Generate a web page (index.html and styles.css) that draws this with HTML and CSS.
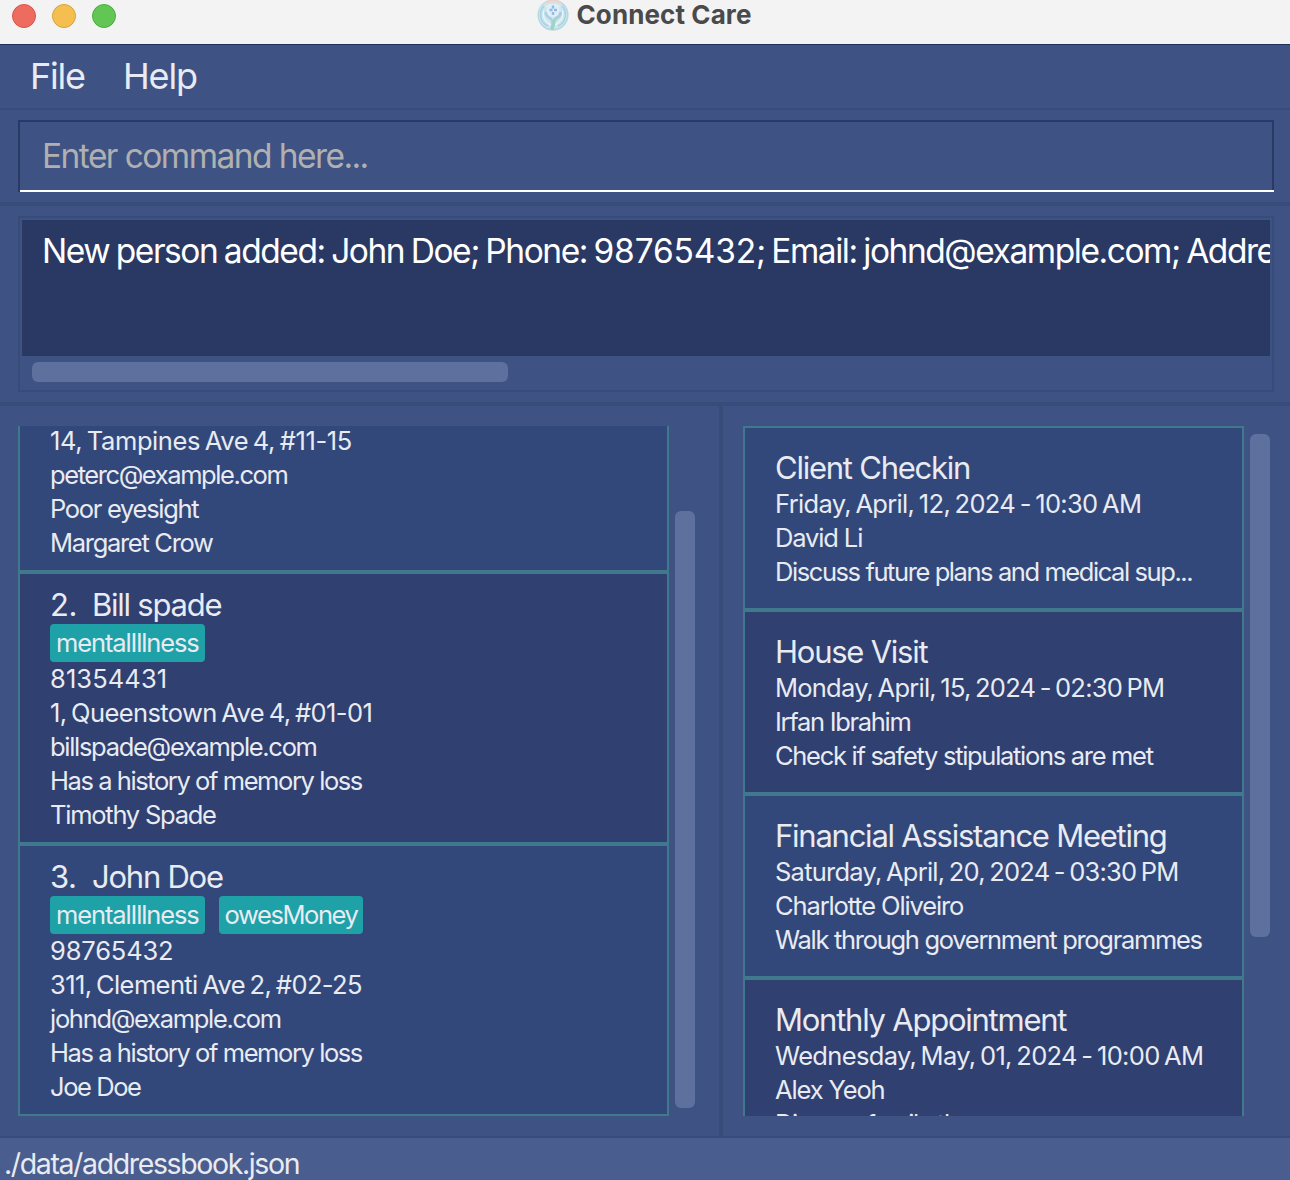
FILE: index.html
```html
<!DOCTYPE html>
<html lang="en">
<head>
<meta charset="utf-8">
<title>Connect Care</title>
<link rel="stylesheet" href="styles.css">
</head>
<body>
<div class="window">
  <header class="titlebar">
    <div class="lights"><i class="light red"></i><i class="light yellow"></i><i class="light green"></i></div>
    <div class="title">
      <svg class="logo" viewBox="0 0 32 32" fill="none">
        <defs>
          <linearGradient id="ring" x1="0" y1="0" x2="1" y2="1"><stop offset="0" stop-color="#b9e6e6"/><stop offset=".55" stop-color="#b4d3ea"/><stop offset="1" stop-color="#b0dfd0"/></linearGradient>
          <linearGradient id="hand" x1="1" y1="0" x2="0" y2="1"><stop offset="0" stop-color="#a9cde8"/><stop offset="1" stop-color="#98d8b6"/></linearGradient>
        </defs>
        <circle cx="16" cy="16" r="15.5" fill="#cfe5ee"/>
        <circle cx="16" cy="16" r="14.8" stroke="url(#ring)" stroke-width="1.4"/>
        <path d="M8 4Q16-.5 24 4" stroke="#f5cfc5" stroke-width="2"/>
        <path d="M7 7A12.400 12.400 0 0 0 11 27M25 7A12.400 12.400 0 0 1 21 27" stroke="#a6d2e5" stroke-width="1.600"/>
        <path d="M6.600 12C5.400 20 9 23 14 26M25.400 12C26.600 20 23 23 18 26" stroke="#eef7f8" stroke-width="1.100"/>
        <path d="M9 8C11 4.800 21 4.800 23 8" stroke="#eef7f8" stroke-width="1"/>
        <circle cx="16" cy="11.500" r="6.500" fill="#e2edf4"/>
        <path d="M16 6.500v3M16 13v3M12.500 11h3M17 11h3" stroke="#8fbce2" stroke-width="2.400"/>
        <path d="M8.500 13C9 18 12 18 14.500 20.500C16 22.500 15.500 26 14 30" stroke="#a6d0e4" stroke-width="2.200"/>
        <path d="M23.500 13C24 18 20 18 18 20.500C16 23 17.500 26 15 30.500" stroke="url(#hand)" stroke-width="3"/>
      </svg>
      <span>Connect Care</span>
    </div>
  </header>
  <nav class="menubar"><span class="file">File</span><span class="help">Help</span></nav>
  <section class="command"><div class="command-field">Enter command here...</div></section>
  <section class="result">
    <div class="result-box">
      <div class="result-text">New person added: John Doe; Phone: <span class="digits">98765432</span>; Email: johnd@example.com; Address: 311, Clementi Ave 2, #02-25</div>
      <div class="h-track"><div class="h-thumb"></div></div>
    </div>
  </section>
  <main class="panes">
    <section class="pane persons">
      <div class="list at-end">
        <article class="cell person odd">
          <p class="numeric ls-4">14, Tampines Ave 4, #11-15</p>
          <p class="ls-14">peterc@example.com</p>
          <p class="ls-13">Poor eyesight</p>
          <p class="ls-13">Margaret Crow</p>
        </article>
        <article class="cell person even">
          <h2><span class="index">2.</span>Bill spade</h2>
          <div class="tags"><span class="tag ls-11">mentalIllness</span></div>
          <p class="ls-0">81354431</p>
          <p class="numeric ls-6">1, Queenstown Ave 4, #01-01</p>
          <p class="ls-13">billspade@example.com</p>
          <p class="ls-14">Has a history of memory loss</p>
          <p class="ls-12">Timothy Spade</p>
        </article>
        <article class="cell person odd">
          <h2><span class="index">3.</span>John Doe</h2>
          <div class="tags"><span class="tag ls-11">mentalIllness</span><span class="tag ls-14">owesMoney</span></div>
          <p class="ls-1">98765432</p>
          <p class="numeric ls-6">311, Clementi Ave 2, #02-25</p>
          <p class="ls-13">johnd@example.com</p>
          <p class="ls-14">Has a history of memory loss</p>
          <p class="ls-14">Joe Doe</p>
        </article>
      </div>
      <div class="v-track"><div class="v-thumb low"></div></div>
    </section>
    <section class="pane appointments">
      <div class="list">
        <article class="cell appt odd">
          <h2>Client Checkin</h2>
          <p class="numeric ls-7">Friday, April, 12, 2024 - 10:30 AM</p>
          <p class="ls-11">David Li</p>
          <p class="ls-14">Discuss future plans and medical sup...</p>
        </article>
        <article class="cell appt even">
          <h2>House Visit</h2>
          <p class="numeric ls-8">Monday, April, 15, 2024 - 02:30 PM</p>
          <p class="ls-13">Irfan Ibrahim</p>
          <p class="ls-13">Check if safety stipulations are met</p>
        </article>
        <article class="cell appt odd">
          <h2>Financial Assistance Meeting</h2>
          <p class="numeric ls-8">Saturday, April, 20, 2024 - 03:30 PM</p>
          <p class="ls-11">Charlotte Oliveiro</p>
          <p class="ls-13">Walk through government programmes</p>
        </article>
        <article class="cell appt even">
          <h2>Monthly Appointment</h2>
          <p class="numeric ls-7">Wednesday, May, 01, 2024 - 10:00 AM</p>
          <p class="ls-11">Alex Yeoh</p>
          <p class="ls-13">Discuss family therapy</p>
        </article>
      </div>
      <div class="v-track"><div class="v-thumb high"></div></div>
    </section>
  </main>
  <footer class="status">./data/addressbook.json</footer>
</div>
</body>
</html>
```
FILE: styles.css
```css
* { box-sizing: border-box; }
body { margin: 0; font-family: Inter, "Liberation Sans", sans-serif; }
h2, p { margin: 0; font-weight: 400; white-space: nowrap; }

.window { width: 1290px; height: 1180px; display: flex; flex-direction: column; background: #3e5383; color: #e9ebf2; overflow: hidden; }

.titlebar { height: 45px; flex: none; background: #f3f3f3; border-bottom: 1px solid #1b305f; display: grid; grid-template-columns: 1fr auto 1fr; align-items: start; }
.lights { display: flex; gap: 16px; padding: 4px 0 0 12px; }
.light { width: 24px; height: 24px; border-radius: 50%; border: 1px solid; }
.red { background: #ed6b5f; border-color: #d6574c; }
.yellow { background: #f5bf4f; border-color: #d9a23c; }
.green { background: #61c654; border-color: #4ead3d; }
.title { display: flex; align-items: center; gap: 8px; height: 29px; padding-right: 2px; color: #4a4a4a; font-size: 26px; line-height: 29px; font-weight: 700; letter-spacing: .1px; }
.logo { width: 32px; height: 32px; display: block; }

.menubar { height: 65px; flex: none; display: flex; align-items: center; gap: 38px; padding: 0 0 2px 30px; border-bottom: 2px solid #384c7a; font-size: 36px; }
.file { letter-spacing: -1.2px; }
.help { letter-spacing: -1.1px; }

.command { height: 96px; flex: none; padding: 10px 16px 0 18px; border-bottom: 4px solid #384c7a; }
.command-field { height: 72px; background: linear-gradient(#293a66, #293a66) 0 0 / 2px 100% no-repeat, linear-gradient(#fff, #fff) 0 100% / 100% 2px no-repeat, linear-gradient(#293a66, #293a66) 100% 0 / 2px 100% no-repeat, linear-gradient(#293a66, #293a66) 0 0 / 100% 2px no-repeat; padding: 2px 22px 2px 24px; line-height: 69px; color: #b0b0b0; font-size: 33.5px; letter-spacing: -1.56px; }

.result { height: 200px; flex: none; padding: 10px 16px 0 18px; border-bottom: 4px solid #384c7a; }
.result-box { height: 176px; border: 2px solid #384c7a; padding: 2px; }
.result-text { height: 136px; background: #2a3964; color: #fff; font-size: 33.5px; letter-spacing: -1.44px; word-spacing: -1.5px; line-height: 62px; padding-left: 20px; white-space: nowrap; overflow: hidden; }
.digits { letter-spacing: -.15px; }
.h-track { padding: 6px 10px; }
.h-thumb { width: 476px; height: 20px; border-radius: 6px; background: #5e709d; }

.panes { height: 732px; flex: none; display: grid; grid-template-columns: 723px 1fr; border-bottom: 2px solid #384c7a; }
.pane { display: flex; padding: 20px 0 20px 18px; min-width: 0; }
.persons { border-right: 4px solid #384c7a; }
.appointments { padding-left: 20px; }
.list { height: 690px; flex: none; display: flex; flex-direction: column; overflow: hidden; }
.persons .list { width: 651px; }
.appointments .list { width: 501px; }
.at-end { justify-content: flex-end; }
.cell { flex: none; border: 2px solid #40788d; padding: 0 30px; font-size: 25.5px; }
.person { padding: 13px 30px 10px; }
.appt { height: 184px; padding-top: 22px; padding-left: 30px; }
.odd { background: #33487a; }
.even { background: #2f4071; }
.cell h2 { height: 35px; line-height: 35px; margin-bottom: 2px; font-size: 31px; letter-spacing: -1.24px; }
.cell p { height: 34px; line-height: 34px; }
.cell .numeric { word-spacing: -2px; }
.index { display: inline-block; width: 42px; letter-spacing: -.4px; }
.tags { display: flex; gap: 14px; height: 38px; }
.tag { height: 38px; line-height: 38px; border-radius: 4px; padding: 0 6px; background: #1fa1a8; }

.v-track { padding: 8px 6px; }
.v-thumb { width: 20px; border-radius: 6px; background: #5e709d; }
.low { height: 597px; margin-top: 77px; }
.high { height: 503px; }

.status { flex: 1; background: #495e8e; padding-left: 4px; font-size: 28.5px; line-height: 52px; letter-spacing: -1.38px; }

.cell .ls-0 { letter-spacing: .1px; }
.cell .ls-1 { letter-spacing: -.15px; }
.cell .ls-4 { letter-spacing: -.41px; }
.cell .ls-6 { letter-spacing: -.6px; }
.cell .ls-7 { letter-spacing: -.67px; }
.cell .ls-8 { letter-spacing: -.76px; }
.cell .ls-11 { letter-spacing: -1.13px; }
.cell .ls-12 { letter-spacing: -1.24px; }
.cell .ls-13 { letter-spacing: -1.3px; }
.cell .ls-14 { letter-spacing: -1.42px; }
```
